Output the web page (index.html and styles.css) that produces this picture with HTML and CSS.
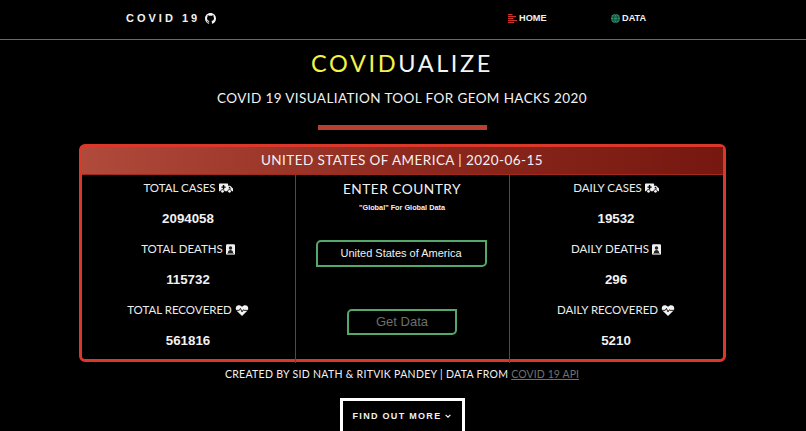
FILE: index.html
```html
<!DOCTYPE html>
<html lang="en">
<head>
<meta charset="utf-8">
<title>COVID 19</title>
<link rel="stylesheet" href="styles.css">
</head>
<body>
<header class="nav">
  <div class="brand">COVID 19
    <svg class="gh" viewBox="0 0 16 16"><path fill="currentColor" d="M8 0C3.58 0 0 3.58 0 8c0 3.54 2.29 6.53 5.47 7.59.4.07.55-.17.55-.38v-1.5c-2.01.37-2.53-.49-2.69-.94-.09-.23-.48-.94-.82-1.13-.28-.15-.68-.52-.01-.53.63-.01 1.08.58 1.23.82.72 1.21 1.87.87 2.33.66.07-.52.28-.87.51-1.07-1.78-.2-3.64-.89-3.64-3.95 0-.87.31-1.59.82-2.15-.08-.2-.36-1.02.08-2.12 0 0 .67-.21 2.2.82.64-.18 1.32-.27 2-.27s1.36.09 2 .27c1.53-1.04 2.2-.82 2.2-.82.44 1.1.16 1.92.08 2.12.51.56.82 1.27.82 2.15 0 3.07-1.87 3.75-3.65 3.95.29.25.54.73.54 1.48v2.2c0 .21.15.46.55.38A8 8 0 0 0 16 8c0-4.42-3.58-8-8-8z"/></svg>
  </div>
  <nav class="links">
    <a class="link link-home"><svg class="nav-ico" viewBox="0 0 10 10"><path fill="#c8332a" d="M0 0h5v1.3H0zM0 2.2h9v1.3H0zM0 4.4h6v1.3H0zM0 6.6h10v1.3H0zM0 8.7h7V10H0z"/></svg>HOME</a>
    <a class="link link-data"><svg class="nav-ico" viewBox="0 0 10 10"><circle cx="5" cy="5" r="5" fill="#2e8f6c"/><path fill="none" stroke="#0b2a20" stroke-width=".7" d="M0 3.4h10M0 6.6h10M5 0c-3 3-3 7 0 10M5 0c3 3 3 7 0 10"/></svg>DATA</a>
  </nav>
</header>

<main class="main">
  <h1 class="title"><span class="title-accent">COVID</span>UALIZE</h1>
  <p class="subtitle">COVID 19 VISUALIATION TOOL FOR GEOM HACKS 2020</p>
  <div class="rule"></div>

  <section class="card">
    <div class="card-head">UNITED STATES OF AMERICA | 2020-06-15</div>
    <div class="card-body">
      <div class="col">
        <div class="stat-label">TOTAL CASES <svg class="ico ico-wide" viewBox="0 0 20 14"><use href="#amb"/></svg></div>
        <div class="stat-value">2094058</div>
        <div class="stat-label">TOTAL DEATHS <svg class="ico" viewBox="0 0 12 14"><use href="#grave"/></svg></div>
        <div class="stat-value">115732</div>
        <div class="stat-label">TOTAL RECOVERED <svg class="ico ico-wide" viewBox="0 0 16 14"><use href="#heart"/></svg></div>
        <div class="stat-value">561816</div>
      </div>
      <div class="col col-mid">
        <div class="enter">ENTER COUNTRY</div>
        <div class="hint">"Global" For Global Data</div>
        <div class="country">United States of America</div>
        <div class="get">Get Data</div>
      </div>
      <div class="col">
        <div class="stat-label">DAILY CASES <svg class="ico ico-wide" viewBox="0 0 20 14"><use href="#amb"/></svg></div>
        <div class="stat-value">19532</div>
        <div class="stat-label">DAILY DEATHS <svg class="ico" viewBox="0 0 12 14"><use href="#grave"/></svg></div>
        <div class="stat-value">296</div>
        <div class="stat-label">DAILY RECOVERED <svg class="ico ico-wide" viewBox="0 0 16 14"><use href="#heart"/></svg></div>
        <div class="stat-value">5210</div>
      </div>
    </div>
  </section>

  <p class="credit">CREATED BY SID NATH &amp; RITVIK PANDEY | DATA FROM <a class="credit-link">COVID 19 API</a></p>
  <div class="more">FIND OUT MORE <svg class="chev" viewBox="0 0 10 6"><path fill="none" stroke="currentColor" stroke-width="2" d="M1 1l4 4 4-4"/></svg></div>
</main>

<svg class="defs" width="0" height="0">
  <defs>
    <g id="amb">
      <path fill="#f2f2f2" d="M1 0h11a1 1 0 0 1 1 1v2h3l4 4v4H0V1a1 1 0 0 1 1-1z"/>
      <path fill="#000" d="M5.500 2h2v2h2v2h-2v2h-2V6h-2V4h2zM14 4.500v2.500h3.500L15 4.500z"/>
      <circle cx="5" cy="11" r="3" fill="#000"/><circle cx="15" cy="11" r="3" fill="#000"/>
      <circle cx="5" cy="11" r="2" fill="#f2f2f2"/><circle cx="15" cy="11" r="2" fill="#f2f2f2"/>
    </g>
    <g id="grave">
      <rect width="12" height="14" rx="1.500" fill="#f2f2f2"/>
      <circle cx="6" cy="5" r="2.300" fill="#222"/>
      <path d="M2.500 11.500c0-5 7-5 7 0zM1.500 12.200h9v1h-9z" fill="#222"/>
    </g>
    <g id="heart">
      <path fill="#f2f2f2" d="M8 14L1.200 7.300C-.5 5.500-.3 2.600 1.500 1.100 3.300-.4 6.200 0 8 2.200 9.800 0 12.700-.4 14.500 1.100c1.800 1.500 2 4.400.3 6.200z"/>
      <path fill="none" stroke="#000" stroke-width="1.100" d="M0 6.800h4.500l1.500-2.500 2 4.500 1.500-2.700 1 .7H16"/>
    </g>
  </defs>
</svg>
</body>
</html>
```

FILE: styles.css
```css
* { box-sizing: border-box; }
html, body { margin: 0; padding: 0; height: 431px; overflow: hidden; background: #000; }
body { color: #f2f2f2; font-family: "Lato", "Liberation Sans", sans-serif; }

.nav {
  height: 40px;
  border-bottom: 1px solid #6a6a6a;
  display: flex;
  align-items: center;
  padding: 0 0 3px 126px;
}
.brand {
  width: 382px;
  font-family: "Liberation Sans", sans-serif;
  font-weight: 700;
  font-size: 11px;
  letter-spacing: 3px;
  display: flex;
  align-items: center;
  gap: 5px;
}
.gh { width: 11px; height: 11px; }
.links { display: flex; }
.link {
  display: flex;
  align-items: center;
  gap: 2px;
  font-family: "Liberation Sans", sans-serif;
  font-weight: 700;
  font-size: 9.200px;
}
.link-home { width: 103px; }
.nav-ico { width: 9px; height: 9px; }

.main { display: flex; flex-direction: column; align-items: center; padding-right: 2px; }
.title {
  margin: 10px 0 0;
  font-weight: 400;
  font-size: 23.500px;
  line-height: 26px;
  letter-spacing: 2.600px;
  color: #f4f4f4;
}
.title-accent { color: #f4f14a; }
.subtitle {
  margin: 13px 0 0;
  font-size: 13.500px;
  line-height: 18px;
  letter-spacing: .400px;
}
.rule { width: 169px; height: 5px; margin-top: 18px; background: #b8402f; }

.card {
  width: 647px;
  height: 218px;
  margin-top: 14px;
  border: 3px solid #d9382a;
  border-radius: 6px;
  display: flex;
  flex-direction: column;
}
.card-head {
  height: 28px;
  flex: none;
  background: linear-gradient(90deg, #b04a3b 0%, #8e2a1f 50%, #761810 100%);
  border-bottom: 1px solid #a5281e;
  text-align: center;
  font-size: 13.500px;
  line-height: 27px;
  letter-spacing: .430px;
}
.card-body { flex: 1; display: grid; grid-template-columns: 213px 215px 1fr; }
.col {
  display: flex;
  flex-direction: column;
  align-items: center;
  padding-top: 5px;
}
.col-mid { border-left: 1px solid #a5281e; border-right: 1px solid #a5281e; }
.stat-label {
  height: 16px;
  margin-bottom: 15px;
  font-size: 11.500px;
  line-height: 16px;
  display: flex;
  align-items: center;
  gap: 3px;
  color: #ececec;
}
.stat-value {
  height: 16px;
  margin-bottom: 14px;
  font-family: "Liberation Sans", sans-serif;
  font-weight: 700;
  font-size: 13.300px;
  line-height: 16px;
}
.ico { width: 9px; height: 11px; }
.ico-wide { width: 14px; height: 11px; }

.enter { font-size: 13.700px; line-height: 18px; letter-spacing: .500px; }
.hint {
  margin-top: 5px;
  font-family: "Liberation Sans", sans-serif;
  font-weight: 700;
  font-size: 7.300px;
  line-height: 9px;
}
.country {
  width: 171px;
  height: 27px;
  margin-top: 28px;
  margin-right: 2px;
  border: 2px solid #55a86c;
  border-radius: 5px 0 5px 0;
  text-align: center;
  font-family: "Liberation Sans", sans-serif;
  font-size: 11px;
  line-height: 23px;
}
.get {
  width: 110px;
  height: 26px;
  margin-top: 42px;
  border: 2px solid #55a86c;
  border-radius: 5px 0 5px 0;
  text-align: center;
  font-family: "Liberation Sans", sans-serif;
  font-size: 13px;
  line-height: 22px;
  color: #6e6e6e;
}

.credit {
  margin: 5px 0 0;
  font-size: 10.500px;
  line-height: 14px;
  letter-spacing: .300px;
}
.credit-link { color: #707070; text-decoration: underline; letter-spacing: .100px; }
.more {
  width: 125px;
  height: 44px;
  margin-top: 17px;
  flex: none;
  border: 3px solid #fff;
  border-bottom: 0;
  display: flex;
  justify-content: center;
  align-items: center;
  gap: 4px;
  padding-bottom: 12px;
  font-family: "Liberation Sans", sans-serif;
  font-weight: 700;
  font-size: 9px;
  letter-spacing: 1.300px;
}
.chev { width: 6px; height: 4px; }
.defs { position: absolute; }
```
